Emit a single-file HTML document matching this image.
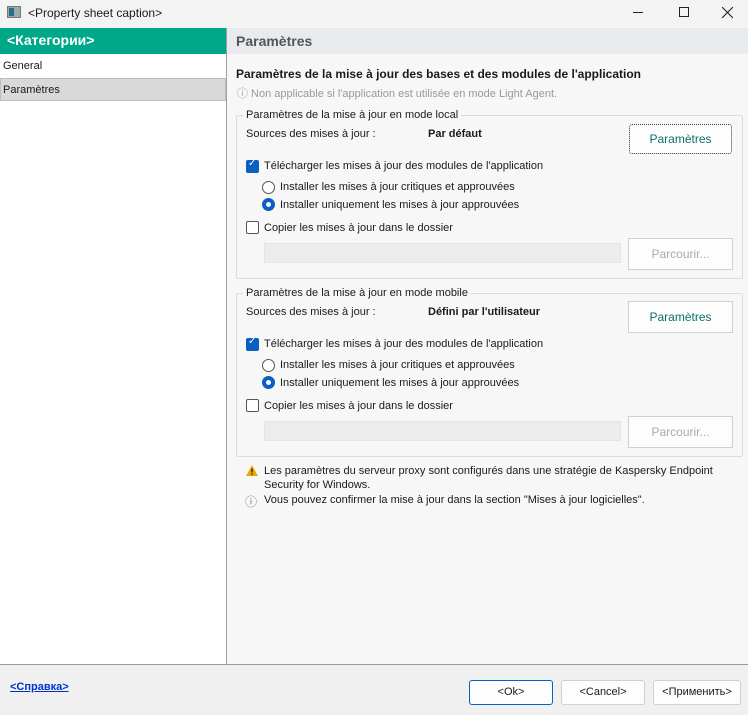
<!DOCTYPE html>
<html><head><meta charset="utf-8"><style>
*{margin:0;padding:0;box-sizing:border-box}
body{width:748px;height:715px;position:relative;background:#f7f7f7;font-family:"Liberation Sans",sans-serif;font-size:11px;color:#1a1a1a;overflow:hidden}
.a{position:absolute;white-space:nowrap}
.btn{position:absolute;border:1px solid #d0d0d0;background:#fdfdfd;border-radius:3px;text-align:center;font-size:12px}
.cb{position:absolute;width:13px;height:13px;border:1px solid #555;border-radius:2px;background:#fff}
.cb.on{background:#0a5fc1;border-color:#0a5fc1}
.rb{position:absolute;width:13px;height:13px;border:1px solid #555;border-radius:50%;background:#fff}
.rb.on{border:4px solid #0a5fc1}
.grp{position:absolute;border:1px solid #dcdcdc;border-radius:2px}
.inp{position:absolute;background:#ececec;border:1px solid #e4e4e4}
</style></head><body>
<div class="a" style="left:0;top:0;width:748px;height:27px;background:#f3f3f3"></div>
<div class="a" style="left:7px;top:6px;width:14px;height:12px;background:#9aa;border:1px solid #777"><div style="position:absolute;left:1px;top:1px;width:5px;height:8px;background:#2a6a8a"></div></div>
<div class="a" style="left:28px;top:6px;font-size:12px">&lt;Property sheet caption&gt;</div>
<div class="a" style="left:633px;top:12px;width:10px;height:1px;background:#222"></div>
<div class="a" style="left:679px;top:7px;width:10px;height:10px;border:1px solid #222"></div>
<svg class="a" style="left:722px;top:7px" width="11" height="11"><path d="M0 0L11 11M11 0L0 11" stroke="#222" stroke-width="1.1"/></svg>

<div class="a" style="left:0;top:28px;width:226px;height:636px;background:#fff"></div>
<div class="a" style="left:226px;top:28px;width:1px;height:636px;background:#a0a0a0"></div>
<div class="a" style="left:0;top:28px;width:226px;height:26px;background:#00a88a;color:#fff;font-weight:bold;font-size:14px;padding:4px 0 0 7px">&lt;Категории&gt;</div>
<div class="a" style="left:3px;top:60px">General</div>
<div class="a" style="left:0;top:78px;width:226px;height:23px;background:#d9d9d9;border:1px solid #bdbdbd"></div>
<div class="a" style="left:3px;top:84px">Paramètres</div>

<div class="a" style="left:227px;top:28px;width:521px;height:26px;background:#e7ebed;color:#555;font-weight:bold;font-size:14px;padding:5px 0 0 9px">Paramètres</div>
<div class="a" style="left:236px;top:67px;font-weight:bold;font-size:12px">Paramètres de la mise à jour des bases et des modules de l'application</div>
<div class="a" style="left:237px;top:85px;color:#999">ⓘ Non applicable si l'application est utilisée en mode Light Agent.</div>

<div class="grp" style="left:236px;top:115px;width:507px;height:164px"></div>
<div class="a" style="left:243px;top:109px;background:#f7f7f7;padding:0 3px">Paramètres de la mise à jour en mode local</div>
<div class="a" style="left:246px;top:128px">Sources des mises à jour :</div>
<div class="a" style="left:428px;top:128px;font-weight:bold">Par défaut</div>
<div class="btn" style="left:629px;top:124px;width:103px;height:30px;line-height:28px;color:#0b6e6e;border:1px dotted #333">Paramètres</div>
<div class="cb on" style="left:246px;top:160px"><span style="position:absolute;left:1px;top:-3px;color:#fff;font-size:10px">✓</span></div>
<div class="a" style="left:264px;top:160px">Télécharger les mises à jour des modules de l'application</div>
<div class="rb" style="left:262px;top:181px"></div>
<div class="a" style="left:280px;top:181px">Installer les mises à jour critiques et approuvées</div>
<div class="rb on" style="left:262px;top:198px"></div>
<div class="a" style="left:280px;top:199px">Installer uniquement les mises à jour approuvées</div>
<div class="cb" style="left:246px;top:221px"></div>
<div class="a" style="left:264px;top:222px">Copier les mises à jour dans le dossier</div>
<div class="inp" style="left:264px;top:243px;width:357px;height:20px"></div>
<div class="btn" style="left:628px;top:238px;width:105px;height:32px;line-height:30px;color:#aaa;border-radius:0">Parcourir...</div>

<div class="grp" style="left:236px;top:293px;width:507px;height:164px"></div>
<div class="a" style="left:243px;top:287px;background:#f7f7f7;padding:0 3px">Paramètres de la mise à jour en mode mobile</div>
<div class="a" style="left:246px;top:306px">Sources des mises à jour :</div>
<div class="a" style="left:428px;top:306px;font-weight:bold">Défini par l'utilisateur</div>
<div class="btn" style="left:628px;top:301px;width:105px;height:32px;line-height:30px;color:#0b6e6e;border-radius:0">Paramètres</div>
<div class="cb on" style="left:246px;top:338px"><span style="position:absolute;left:1px;top:-3px;color:#fff;font-size:10px">✓</span></div>
<div class="a" style="left:264px;top:338px">Télécharger les mises à jour des modules de l'application</div>
<div class="rb" style="left:262px;top:359px"></div>
<div class="a" style="left:280px;top:359px">Installer les mises à jour critiques et approuvées</div>
<div class="rb on" style="left:262px;top:376px"></div>
<div class="a" style="left:280px;top:377px">Installer uniquement les mises à jour approuvées</div>
<div class="cb" style="left:246px;top:399px"></div>
<div class="a" style="left:264px;top:400px">Copier les mises à jour dans le dossier</div>
<div class="inp" style="left:264px;top:421px;width:357px;height:20px"></div>
<div class="btn" style="left:628px;top:416px;width:105px;height:32px;line-height:30px;color:#aaa;border-radius:0">Parcourir...</div>

<svg class="a" style="left:246px;top:465px" width="12" height="11"><path d="M6 0L12 11H0Z" fill="#f0a800"/><rect x="5.3" y="3.5" width="1.4" height="4" fill="#222"/><rect x="5.3" y="8.5" width="1.4" height="1.4" fill="#222"/></svg>
<div class="a" style="left:264px;top:464px;line-height:14px;white-space:normal;width:480px">Les paramètres du serveur proxy sont configurés dans une stratégie de Kaspersky Endpoint Security for Windows.</div>
<div class="a" style="left:245px;top:493px;color:#777;font-size:12px">ⓘ</div>
<div class="a" style="left:264px;top:494px">Vous pouvez confirmer la mise à jour dans la section "Mises à jour logicielles".</div>

<div class="a" style="left:0;top:664px;width:748px;height:51px;background:#f0f0f0;border-top:1px solid #999"></div>
<div class="a" style="left:10px;top:681px;color:#0033cc;text-decoration:underline;font-weight:bold">&lt;Справка&gt;</div>
<div class="btn" style="left:469px;top:680px;width:84px;height:25px;line-height:23px;border-color:#0a5fc1;font-size:11px">&lt;Ok&gt;</div>
<div class="btn" style="left:561px;top:680px;width:84px;height:25px;line-height:23px;font-size:11px">&lt;Cancel&gt;</div>
<div class="btn" style="left:653px;top:680px;width:88px;height:25px;line-height:23px;font-size:11px">&lt;Применить&gt;</div>
</body></html>
